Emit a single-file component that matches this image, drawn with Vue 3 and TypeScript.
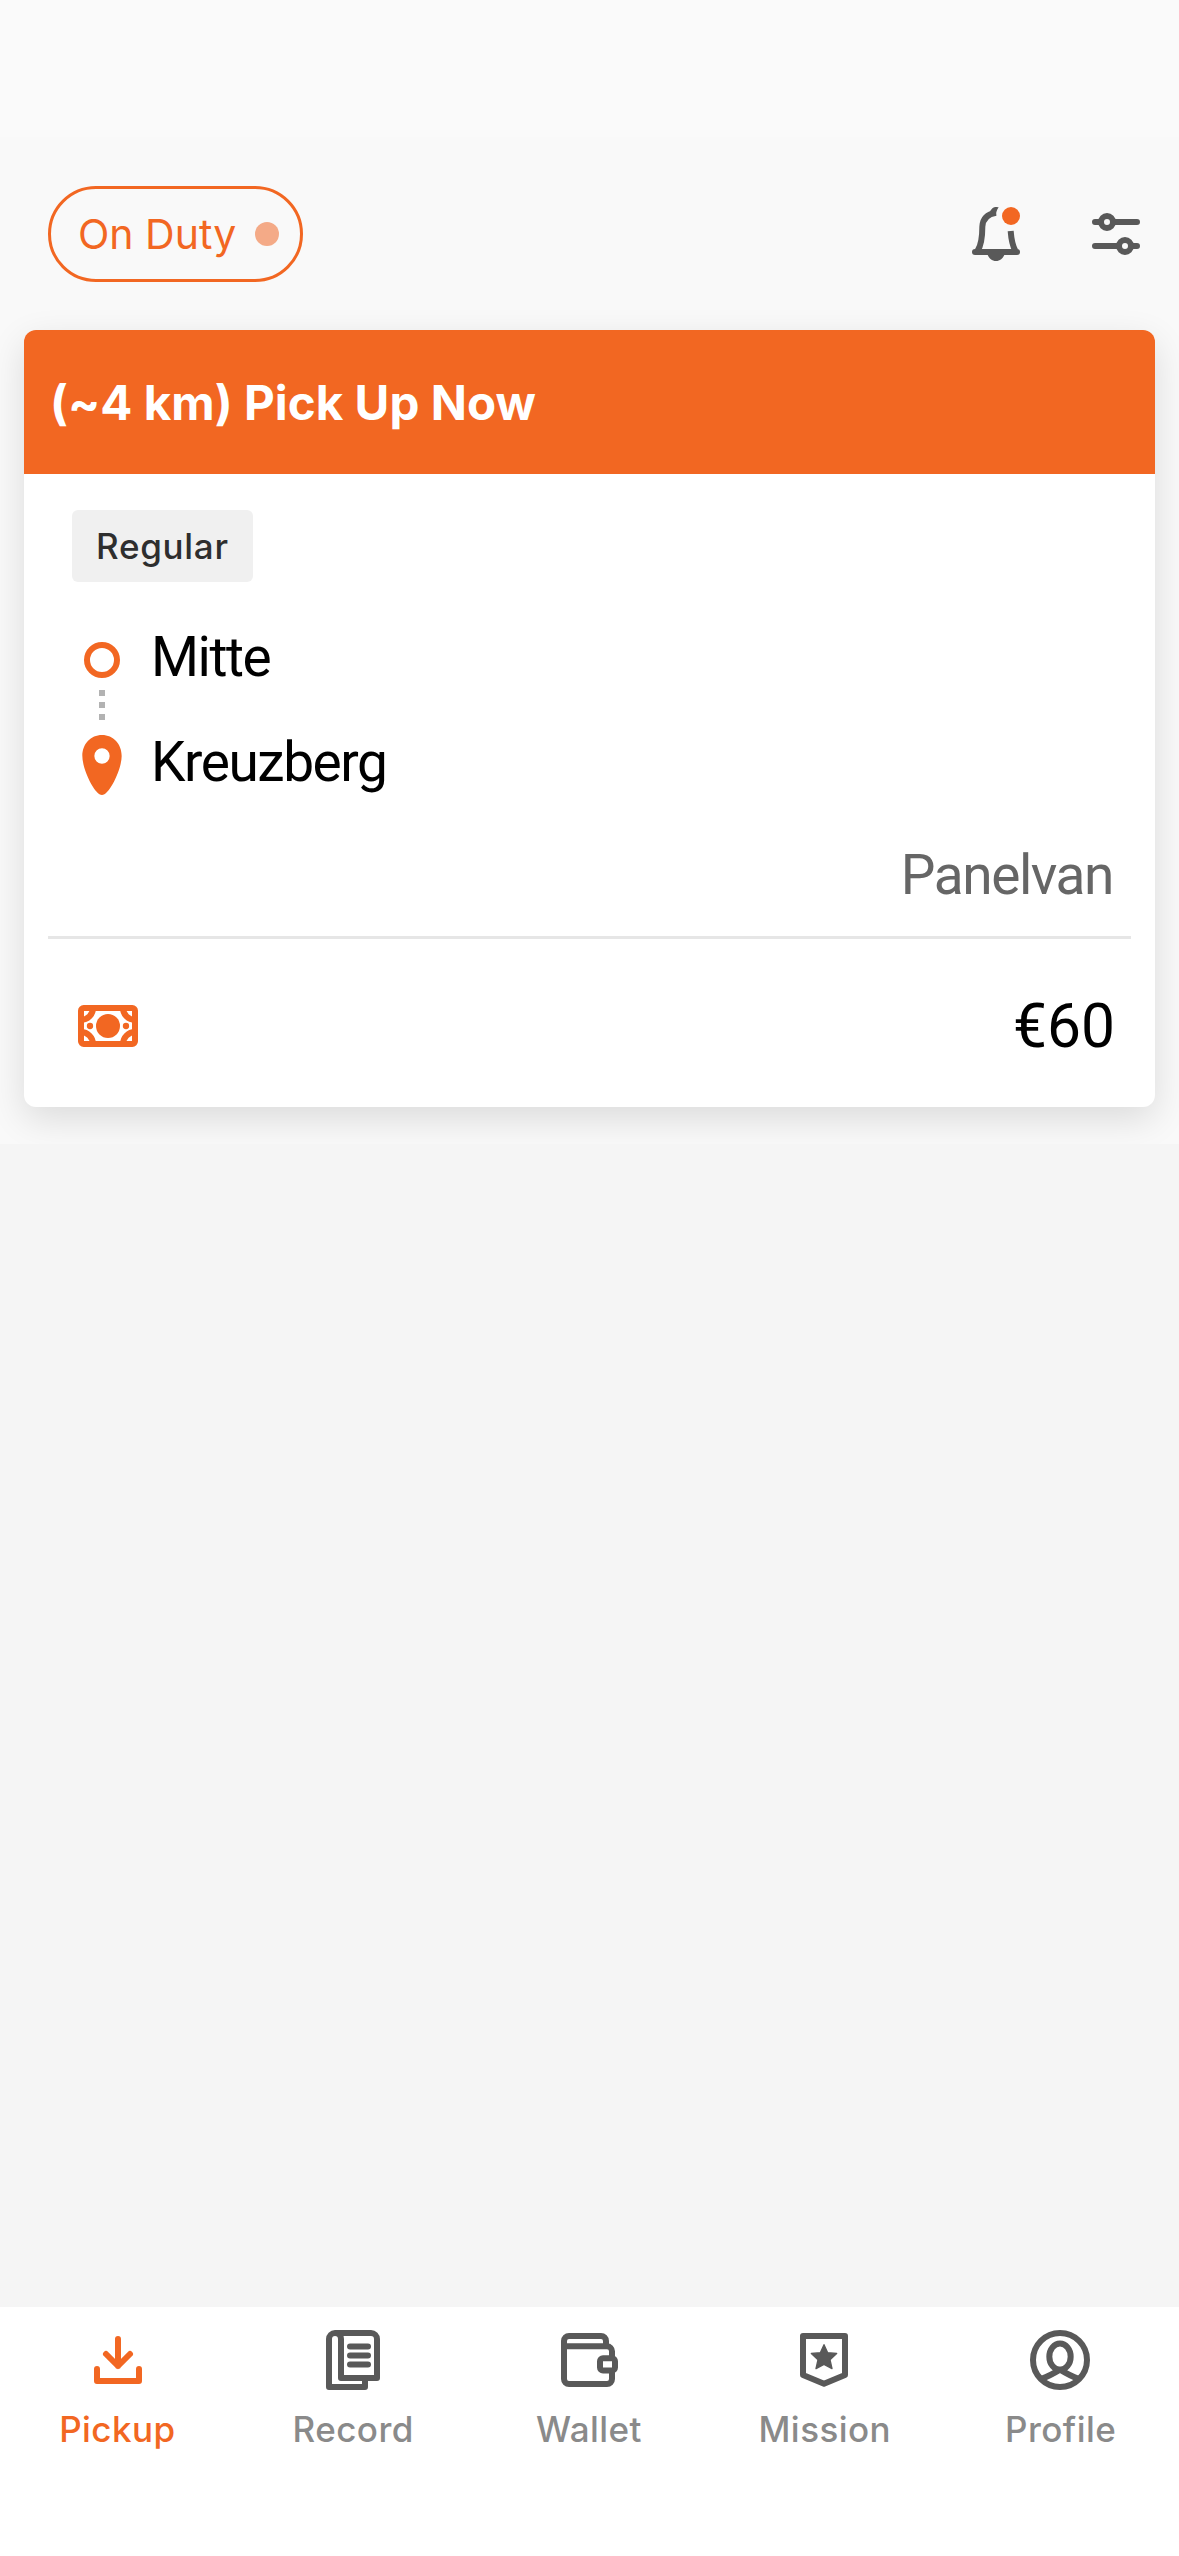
<script setup lang="ts">
import { ref } from 'vue'

interface Tab { id: string; label: string; viewBox: string }
const tabs: Tab[] = [
  { id: 'pickup', label: 'Pickup', viewBox: '246 102 216 216' },
  { id: 'record', label: 'Record', viewBox: '234 102 216 216' },
  { id: 'wallet', label: 'Wallet', viewBox: '219 102 216 216' },
  { id: 'mission', label: 'Mission', viewBox: '207 102 216 216' },
  { id: 'profile', label: 'Profile', viewBox: '255 102 216 216' },
]
const active = ref('pickup')
</script>

<template>
  <div class="screen">
    <div class="status-bar"></div>
    <main class="feed">
      <header class="topbar">
        <button class="duty"><span>On Duty</span><i class="duty-dot"></i></button>
        <div class="actions">
          <svg class="icon" viewBox="60 54 216 216">
            <g fill="none" stroke="#595959" stroke-width="18">
              <path d="M168 98C142 102 128 117 127 140C127 168 124 194 113 212" />
              <path d="M212 153C214 180 217 196 226 212" />
              <path d="M105 216H231" stroke-linecap="round" />
            </g>
            <path d="M141 220C146 235 156 243 168 243S190 235 195 220ZM150 94C156 84 162 80 169 81L176 82C171 89 168 96 168 107Z" fill="#595959" />
            <circle cx="213" cy="108" r="27" fill="#f26722" />
          </svg>
          <svg class="icon" viewBox="420 54 216 216" fill="none" stroke="#595959" stroke-width="18" stroke-linecap="round">
            <path d="M465 126H483M519 126H591M465 198H537M573 198H591" />
            <circle cx="501" cy="126" r="18" />
            <circle cx="555" cy="198" r="18" />
          </svg>
        </div>
      </header>

      <article class="card">
        <h2 class="card-head">(~4 km) Pick Up Now</h2>
        <div class="card-body">
          <span class="tag">Regular</span>
          <div class="route">
            <svg class="route-mark" viewBox="96 126 120 459">
              <circle cx="156" cy="180" r="45" fill="none" stroke="#f26722" stroke-width="18" />
              <path d="M147 270h18v18h-18zM147 306h18v18h-18zM147 342h18v18h-18z" fill="#b2b2b2" />
              <path fill-rule="evenodd" fill="#f26722" d="M156 405C190 405 215 432 215 468C215 508 178 585 156 585C134 585 97 508 97 468C97 432 122 405 156 405ZM156 445a23 23 0 1 0 0 46a23 23 0 1 0 0-46Z" />
            </svg>
            <div class="stops">
              <span>Mitte</span>
              <span>Kreuzberg</span>
            </div>
          </div>
          <p class="vehicle">Panelvan</p>
        </div>
        <footer class="fare">
          <svg class="cash" viewBox="234 255 180 126">
            <clipPath id="note"><rect x="243" y="264" width="162" height="108" /></clipPath>
            <rect x="243" y="264" width="162" height="108" rx="8" fill="#fff" stroke="#f26722" stroke-width="18" />
            <g clip-path="url(#note)" fill="none" stroke="#f26722" stroke-width="18">
              <circle cx="243" cy="264" r="36" /><circle cx="405" cy="264" r="36" />
              <circle cx="243" cy="372" r="36" /><circle cx="405" cy="372" r="36" />
            </g>
            <g fill="#f26722"><circle cx="324" cy="318" r="36" /><circle cx="270" cy="318" r="9.5" /><circle cx="378" cy="318" r="9.5" /></g>
          </svg>
          <span class="price">€60</span>
        </footer>
      </article>
    </main>
    <section class="empty"></section>
    <nav class="tabs">
      <a v-for="t in tabs" :key="t.id" class="tab" :class="{ active: t.id === active }">
        <svg class="icon" :viewBox="t.viewBox" fill="none" stroke="currentColor" stroke-width="18" stroke-linejoin="round">
          <path v-if="t.id === 'pickup'" stroke-linecap="round" d="M354 147V228M318 192L354 228L390 192M291 237V273H417V237" />
          <template v-else-if="t.id === 'record'">
            <path d="M375 264V291H267V147a18 18 0 0 1 18-18H393a18 18 0 0 1 18 18V264H303V147a18 18 0 0 0-18-18" />
            <path stroke-linecap="round" d="M330 169.500H384M330 196.500H384M330 223.500H384" />
          </template>
          <template v-else-if="t.id === 'wallet'">
            <path d="M378 169V153a15 15 0 0 0-15-15H267a15 15 0 0 0-15 15V267a15 15 0 0 0 15 15H381a15 15 0 0 0 15-15V184a15 15 0 0 0-15-15H252" />
            <rect x="360" y="205" width="45" height="36.500" rx="9" fill="#fff" />
          </template>
          <template v-else-if="t.id === 'mission'">
            <path d="M249 138H375V255L312 281L249 255Z" />
            <path fill="currentColor" stroke-width="4" d="M312 164L323 188L350 190.500L330 209L336 236L312 223L288 236L294 209L274 190.500L301 188Z" />
          </template>
          <template v-else>
            <circle cx="360" cy="210" r="81" />
            <ellipse cx="360" cy="200" rx="32" ry="39.500" />
            <path d="M306 266C326 259 345 248 360 239C375 248 394 259 414 266" />
          </template>
        </svg>
        <span class="tab-label">{{ t.label }}</span>
      </a>
    </nav>
  </div>
</template>

<style>
body { margin: 0; }
</style>

<style scoped>
.screen { width: 1179px; height: 2556px; display: flex; flex-direction: column; background: #f5f5f5; font-family: Inter, "Liberation Sans", sans-serif; }
.status-bar { height: 137px; background: #fafafa; flex: none; }
.feed { height: 1007px; background: #f9f9f9; overflow: hidden; flex: none; }
.topbar { height: 193px; box-sizing: border-box; padding: 49px 27px 48px 48px; display: flex; justify-content: space-between; }
.duty { width: 255px; height: 96px; box-sizing: border-box; border: 3px solid #f26722; border-radius: 48px; background: none; padding: 0 21px 0 27px; display: flex; align-items: center; justify-content: space-between; color: #f26722; font: 400 41px/50px Inter, sans-serif; white-space: nowrap; }
.duty-dot { width: 24px; height: 24px; border-radius: 50%; background: #f4aa87; }
.actions { display: flex; gap: 48px; padding-top: 12px; }
.icon { width: 72px; height: 72px; display: block; flex: none; }
.card { margin: 0 24px; height: 777px; border-radius: 12px; background: #fff; box-shadow: 0 12px 36px rgba(0, 0, 0, .12); display: flex; flex-direction: column; }
.card-head { margin: 0; height: 144px; box-sizing: border-box; padding-left: 26px; border-radius: 12px 12px 0 0; background: #f26722; color: #fff; font-size: 47.5px; font-weight: 700; letter-spacing: .05px; line-height: 145px; white-space: nowrap; }
.card-body { margin: 0 24px; height: 465px; box-sizing: border-box; border-bottom: 3px solid #e6e6e6; padding: 36px 18px 0 24px; }
.tag { display: block; width: 181px; height: 72px; box-sizing: border-box; padding-left: 24px; border-radius: 6px; background: #f0f0f0; color: #2e2e2e; font-size: 35px; font-weight: 500; letter-spacing: .7px; line-height: 72px; }
.route { display: flex; margin: 60px 0 0 10px; font-family: Roboto, sans-serif; font-size: 55px; letter-spacing: -1.45px; color: #000; }
.route-mark { width: 40px; height: 153px; flex: none; }
.stops { display: flex; flex-direction: column; gap: 41px; margin: -17px 0 -15px 29px; }
.stops span { line-height: 64px; }
.vehicle { margin: 0; padding-top: 48px; text-align: right; font: 400 55px/64px Roboto, sans-serif; letter-spacing: -1.45px; color: #666; }
.fare { flex: 1; display: flex; justify-content: space-between; padding: 0 40px 0 54px; }
.cash { width: 60px; height: 42px; margin-top: 66px; }
.price { font: 400 60.5px/70px Roboto, sans-serif; margin-top: 53px; color: #000; }
.empty { flex: 1; }
.tabs { height: 249px; background: #fff; display: flex; flex: none; }
.tab { flex: 1; display: flex; flex-direction: column; align-items: center; padding-top: 17px; color: #595959; }
.tab-label { color: #8a8a8a; font-size: 35px; font-weight: 500; letter-spacing: .45px; line-height: 42px; margin: 12px 1px 0 0; }
.tab.active, .tab.active .tab-label { color: #f26722; }
</style>
